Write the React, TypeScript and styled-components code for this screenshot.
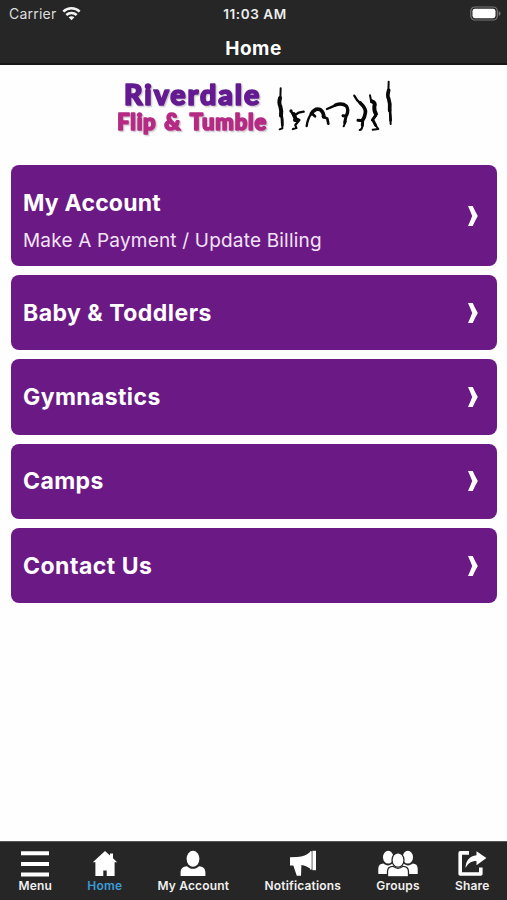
import React from "react";
import styled, { createGlobalStyle } from "styled-components";

const GlobalStyle = createGlobalStyle`
  * { box-sizing: border-box; }
  body { margin: 0; background: #fff; font-family: Inter, "Liberation Sans", sans-serif; }
`;

const Screen = styled.div`
  display: flex;
  flex-direction: column;
  width: 507px;
  height: 900px;
  background: #fefefe;
  overflow: hidden;
`;

const Header = styled.header`
  height: 65px;
  flex: none;
  background: #262626;
  border-bottom: 2px solid #161616;
  color: #fff;
`;

const StatusBar = styled.div`
  display: grid;
  grid-template-columns: 1fr auto 1fr;
  align-items: center;
  height: 28px;
  padding: 0 6px 0 9px;
`;

const Carrier = styled.div`
  display: flex;
  align-items: center;
  gap: 6px;
  margin-top: -2px;
  font-size: 14px;
  line-height: 17px;
  letter-spacing: 0.22px;
  color: #dedede;
`;

const Clock = styled.div`
  font-size: 13.5px;
  font-weight: 600;
  line-height: 17px;
  letter-spacing: 0.6px;
  color: #eee;
`;

const BatteryIcon = styled.svg`
  justify-self: end;
  display: block;
`;

const PageTitle = styled.h1`
  margin: 0;
  padding-top: 9px;
  font-size: 19px;
  font-weight: 700;
  line-height: 24px;
  letter-spacing: 0.5px;
  text-align: center;
`;

const Main = styled.main`
  flex: 1;
  min-height: 0;
`;

const Logo = styled.svg`
  display: block;
  margin: 5px 0 20px 105px;
`;

const LogoText = styled.text`
  font-family: Lato, sans-serif;
  font-weight: 900;
  stroke-linejoin: round;
  filter: drop-shadow(4px 4px 2px rgba(90, 80, 90, 0.3));
`;

const CardList = styled.nav`
  display: flex;
  flex-direction: column;
  gap: 9px;
  padding: 0 10px 0 11px;
`;

const Card = styled.a<{ $tall?: boolean }>`
  display: flex;
  align-items: center;
  justify-content: space-between;
  height: ${(p) => (p.$tall ? "101px" : "75.3px")};
  padding: 0 19px 0 12px;
  border-radius: 8px;
  background: #6b1a85;
  color: #fff;
`;

const CardText = styled.div<{ $tall?: boolean }>`
  padding-top: ${(p) => (p.$tall ? "11px" : "0")};
`;

const CardTitle = styled.div<{ $spacing: number }>`
  font-size: 23px;
  font-weight: 700;
  line-height: 32px;
  letter-spacing: ${(p) => p.$spacing}px;
`;

const CardNote = styled.div`
  margin-top: 8px;
  font-size: 19px;
  line-height: 28px;
  letter-spacing: 0.19px;
  color: #f3e3f7;
`;

const TabBar = styled.footer`
  display: flex;
  justify-content: space-between;
  flex: none;
  height: 59px;
  padding: 7px 17.5px 0 18.5px;
  background: #262626;
  border-top: 1px solid #555;
`;

const Tab = styled.a<{ $active?: boolean }>`
  display: flex;
  flex-direction: column;
  align-items: center;
  gap: 1px;
  font-size: 12px;
  font-weight: 600;
  line-height: 16px;
  letter-spacing: 0.18px;
  color: ${(p) => (p.$active ? "#3c9bd6" : "#f0f0f0")};
`;

const TabIcon = styled.svg`
  display: block;
  height: 28px;
  overflow: visible;
  fill: #fff;
`;

const cards = [
  { title: "My Account", note: "Make A Payment / Update Billing", spacing: 0.2 },
  { title: "Baby & Toddlers", spacing: 0.48 },
  { title: "Gymnastics", spacing: 0.4 },
  { title: "Camps", spacing: 0.4 },
  { title: "Contact Us", spacing: 0.5 },
];

const tabs = [
  {
    label: "Menu",
    width: 30,
    icon: <path d="M1 2.3h28v4H1zM1 13h28v4H1zM1 23.5h28v4H1z" />,
  },
  {
    label: "Home",
    width: 26,
    icon: <path d="M13 2 .8 13.2h2.6V27h7.9v-5.5h3.4V27h7.9V13.2h2.6l-4.2-4V4.5h-3v2z" />,
  },
  {
    label: "My Account",
    width: 26,
    icon: (
      <>
        <ellipse cx="13" cy="9.8" rx="6.4" ry="8" />
        <path d="M.6 27v-3.5c0-4 2.5-6.2 6.4-6.3 3.2 3.4 8.8 3.4 12 0 3.9.1 6.4 2.3 6.4 6.3V27z" />
      </>
    ),
  },
  {
    label: "Notifications",
    width: 28,
    icon: (
      <>
        <path d="M1 8.2 8 8c6-.3 10-2.3 13-5v16.5c-3-1.7-5-2.8-8.6-3.4L12 26.7H7.8L4.3 16.5H1zM21 2.2h1.7v18.3H21z" />
        <path d="M23.4 1.8h3.6v19.4h-3.6z" />
      </>
    ),
  },
  {
    label: "Groups",
    width: 40,
    icon: (
      <>
        <ellipse cx="10.2" cy="8.2" rx="5.2" ry="6.4" />
        <ellipse cx="29.8" cy="8.2" rx="5.2" ry="6.4" />
        <path d="M.3 25v-5.5c0-3 2-4.8 5-4.9 2.8 2.4 6.5 2.4 9.3 0h10.8c2.8 2.4 6.5 2.4 9.3 0 3 .1 5 1.9 5 4.9V25z" />
        <g stroke="#262626" strokeWidth="1.3">
          <path d="M9.5 27.8v-5.2c0-3.4 2.4-5.2 5.5-5.3 3 2.4 7 2.4 10 0 3.1.1 5.5 1.9 5.5 5.3v5.2z" />
          <ellipse cx="20" cy="11" rx="6" ry="7.2" />
        </g>
      </>
    ),
  },
  {
    label: "Share",
    width: 28,
    icon: (
      <>
        <path
          d="M11 3.9H2.2V25H22.8v-6.5"
          fill="none"
          stroke="#fff"
          strokeWidth="3.6"
          strokeLinejoin="round"
        />
        <path d="M18.5 2.2 28.4 9l-9.9 7.2V12C13 12 10 14.5 7.5 19c.2-7.2 4-12 11-12.8z" />
      </>
    ),
  },
];

function WifiIcon() {
  return (
    <svg width="19" height="15" viewBox="0 0 19 15" fill="none" stroke="#f4f4f4" strokeWidth="2.5">
      <path d="M1.3 5.6c4.6-4.5 11.8-4.5 16.4 0M4.3 9c3-2.8 7.4-2.8 10.4 0" />
      <path d="M9.5 14.3 6.6 11.3c1.6-1.5 4.2-1.5 5.8 0z" fill="#f4f4f4" stroke="none" />
    </svg>
  );
}

function Battery() {
  return (
    <BatteryIcon width="31" height="16" viewBox="0 0 31 16">
      <rect x=".8" y="1" width="26.5" height="13" rx="4" fill="#262626" stroke="#777" strokeWidth="1.2" />
      <rect x="2.5" y="2.8" width="23" height="9.4" rx="2.4" fill="#fff" />
      <path d="M28.7 5c2.5 1.3 2.5 3.7 0 5z" fill="#777" />
    </BatteryIcon>
  );
}

function Brand() {
  return (
    <Logo width="300" height="75" viewBox="0 0 900 225">
      <LogoText x="57" y="104" fontSize="86" textLength="406" fill="#641b91" stroke="#641b91" strokeWidth="5">
        Riverdale
      </LogoText>
      <g fontSize="66" fill="#b52b84" stroke="#b52b84" strokeWidth="5">
        <LogoText x="37" y="179" textLength="115">Flip</LogoText>
        <LogoText x="178" y="179" textLength="49" lengthAdjust="spacingAndGlyphs">&amp;</LogoText>
        <LogoText x="254" y="179" textLength="230">Tumble</LogoText>
      </g>
      <g transform="translate(480 0)" fill="none" stroke="#080808" strokeLinecap="round" strokeLinejoin="round">
        <path strokeWidth="6" d="M47 55 46 85M49 122Q54 150 52 175L44 178" />
        <path strokeWidth="12" d="M45 84Q41 101 46 109 50 121 48 137" />
        <path strokeWidth="8" d="M50 135 52 165" />
        <circle cx="78" cy="123" r="5" fill="#080808" stroke="none" />
        <path strokeWidth="7" d="M91 134 101 128 116 125M80 127 88 140M89 150 103 150 91 165 94 174 84 177" />
        <path strokeWidth="12" d="M86 132 92 147M90 150 98 150" />
        <path strokeWidth="7" d="M125 168Q128 145 140 130" />
        <path strokeWidth="11" d="M139 131Q151 112 166 119 177 127 176 141" />
        <path strokeWidth="8" d="M140 130 150 139M174 139 187 146 190 161" />
        <path strokeWidth="7" d="M186 117Q203 110 216 104" />
        <path strokeWidth="10" d="M211 105Q232 98 244 108 252 119 245 135" />
        <path strokeWidth="9" d="M234 137 243 139 239 158" />
        <path strokeWidth="6" d="M242 154 236 169" />
        <path strokeWidth="7" d="M268 77Q275 91 286 100" />
        <path strokeWidth="11" d="M286 99Q304 116 301 129 299 143 293 150" />
        <path strokeWidth="9" d="M279 151 293 152 292 166" />
        <path strokeWidth="6" d="M293 165Q291 180 284 180" />
        <path strokeWidth="6" d="M315 76 319 96M333 137 321 151M329 162 340 177 323 179" />
        <path strokeWidth="12" d="M321 94Q332 98 328 109 327 124 333 132" />
        <path strokeWidth="9" d="M332 136 323 149 332 166" />
        <path strokeWidth="6" d="M371 35 370 70M375 128 377 162" />
        <path strokeWidth="11" d="M371 61Q366 77 371 86 376 100 374 121" />
        <path strokeWidth="8" d="M375 120 377 151" />
      </g>
    </Logo>
  );
}

function Chevron() {
  return (
    <svg width="10" height="20" viewBox="0 0 10 20" fill="#fff">
      <path d="M0 0h4.7Q7 5.2 9.8 10 7 14.8 4.7 20H0Q2.4 14.8 4.2 10 2.4 5.2 0 0z" />
    </svg>
  );
}

export default function App() {
  return (
    <>
      <GlobalStyle />
      <Screen>
        <Header>
          <StatusBar>
            <Carrier>
              Carrier
              <WifiIcon />
            </Carrier>
            <Clock>11:03 AM</Clock>
            <Battery />
          </StatusBar>
          <PageTitle>Home</PageTitle>
        </Header>
        <Main>
          <Brand />
          <CardList>
            {cards.map((card) => (
              <Card key={card.title} $tall={!!card.note}>
                <CardText $tall={!!card.note}>
                  <CardTitle $spacing={card.spacing}>{card.title}</CardTitle>
                  {card.note && <CardNote>{card.note}</CardNote>}
                </CardText>
                <Chevron />
              </Card>
            ))}
          </CardList>
        </Main>
        <TabBar>
          {tabs.map((tab) => (
            <Tab key={tab.label} $active={tab.label === "Home"}>
              <TabIcon width={tab.width} viewBox={`0 0 ${tab.width} 28`}>
                {tab.icon}
              </TabIcon>
              {tab.label}
            </Tab>
          ))}
        </TabBar>
      </Screen>
    </>
  );
}
